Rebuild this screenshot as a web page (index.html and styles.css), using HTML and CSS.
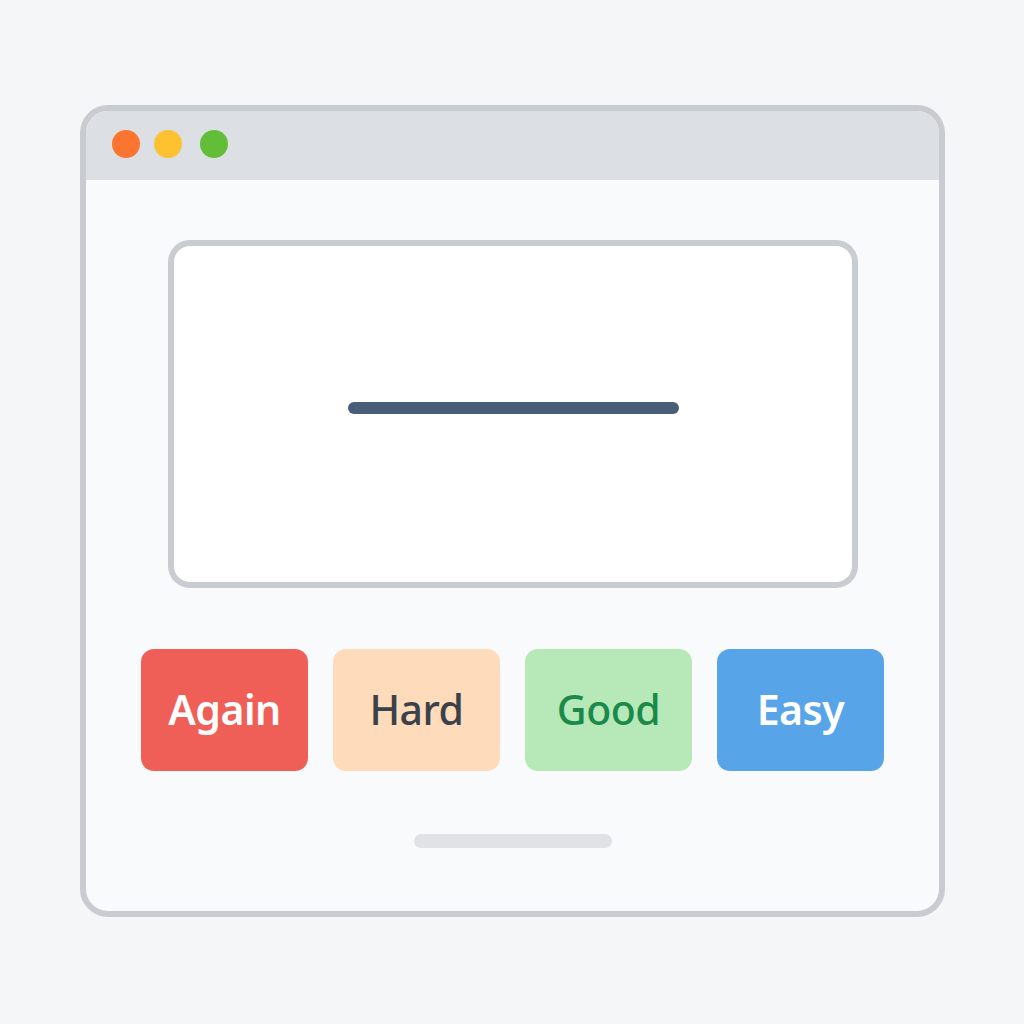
FILE: index.html
```html
<!DOCTYPE html>
<html>
<head>
<meta charset="utf-8">
<link rel="stylesheet" href="styles.css">
</head>
<body>
<div class="window">
  <div class="titlebar">
    <span class="dot red"></span>
    <span class="dot yellow"></span>
    <span class="dot green"></span>
  </div>
  <div class="content">
    <div class="card">
      <div class="line"></div>
    </div>
    <div class="buttons">
      <div class="btn again">Again</div>
      <div class="btn hard">Hard</div>
      <div class="btn good">Good</div>
      <div class="btn easy">Easy</div>
    </div>
    <div class="handle"></div>
  </div>
</div>
</body>
</html>
```
FILE: styles.css
```css
html, body {
  margin: 0;
  padding: 0;
  background: #f4f6f8;
  font-family: "Noto Sans", "Open Sans", sans-serif;
}
body {
  width: 1024px;
  height: 1024px;
  overflow: hidden;
}
.window {
  box-sizing: border-box;
  margin: 105px 0 0 80px;
  width: 865px;
  height: 812px;
  border: 6px solid #c8ccd1;
  border-radius: 28px;
  background: #f9fafb;
  overflow: hidden;
}
.titlebar {
  box-sizing: border-box;
  height: 69px;
  background: #dcdfe3;
  display: flex;
  align-items: center;
  padding-left: 26px;
  padding-bottom: 4px;
  gap: 14px;
}
.dot {
  width: 28px;
  height: 28px;
  border-radius: 50%;
  display: block;
}
.red { background: #fb7430; }
.yellow { background: #fdc131; }
.green { background: #62be38; margin-left: 4px; }
.content {
  display: flex;
  flex-direction: column;
  align-items: center;
  padding-top: 60px;
}
.card {
  box-sizing: border-box;
  width: 690px;
  height: 348px;
  border: 6px solid #c9cdd1;
  border-radius: 22px;
  background: #ffffff;
  display: flex;
  align-items: center;
  justify-content: center;
}
.line {
  width: 331px;
  height: 12px;
  border-radius: 6px;
  background: #4a5d78;
  margin-left: 1px;
  margin-bottom: 12px;
}
.buttons {
  display: flex;
  gap: 25px;
  margin-top: 61px;
}
.btn {
  width: 167px;
  height: 122px;
  border-radius: 13px;
  display: flex;
  align-items: center;
  justify-content: center;
  font-size: 41px;
  letter-spacing: -0.5px;
  padding-bottom: 2px;
  box-sizing: border-box;
}
.again { background: #ef5f58; color: #ffffff; font-weight: 600; }
.hard { background: #fddbbb; color: #3a4148; font-weight: 500; }
.good { background: #b6e8b8; color: #1a8a4a; font-weight: 500; }
.easy { background: #57a5e8; color: #ffffff; font-weight: 600; }
.handle {
  width: 198px;
  height: 14px;
  border-radius: 7px;
  background: #e0e2e5;
  margin-top: 63px;
}
```
